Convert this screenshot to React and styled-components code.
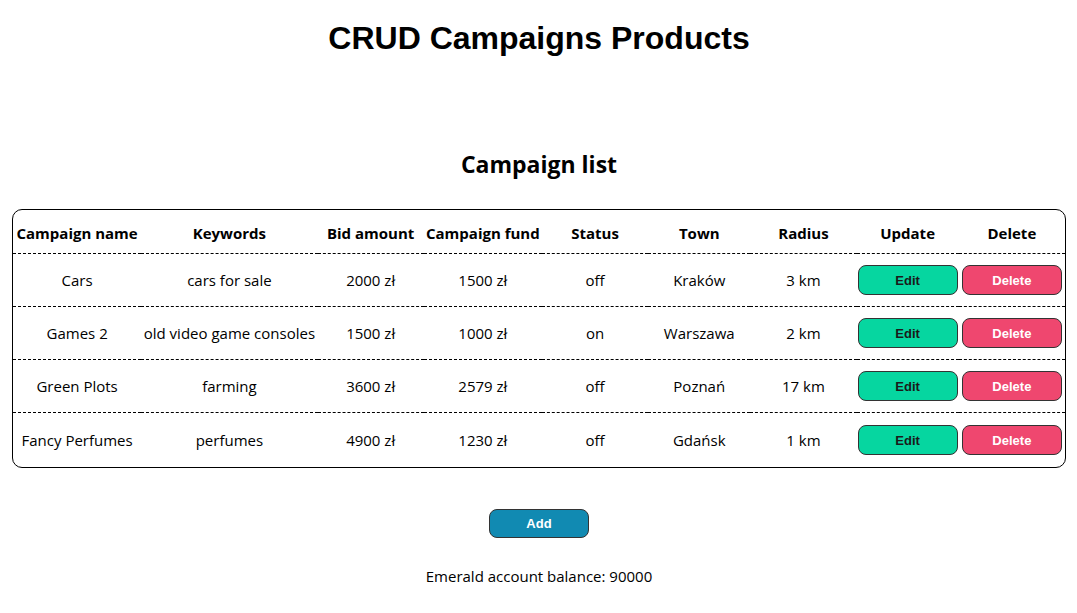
import React from "react";
import styled, { createGlobalStyle } from "styled-components";

const Global = createGlobalStyle`
  html, body { margin: 0; padding: 0; background: #fff; }
  body { font-family: "Open Sans", "Noto Sans", sans-serif; color: #000; }
`;

const Page = styled.div`
  display: flex;
  flex-direction: column;
  align-items: center;
  padding: 0 12px 0 13px;
`;

const Title = styled.h1`
  margin: 20px 0 0;
  font-family: "Liberation Sans", Arial, sans-serif;
  font-size: 32px;
  font-weight: 700;
  line-height: 37px;
`;

const Subtitle = styled.h2`
  margin: 91px 0 0;
  font-size: 23px;
  font-weight: 700;
  line-height: 32px;
`;

const TableBox = styled.div`
  margin-top: 29px;
  width: 100%;
  border: 1px solid #000;
  border-radius: 10px;
  overflow: hidden;
`;

const Table = styled.table`
  width: 100%;
  border-collapse: separate;
  border-spacing: 0;
  table-layout: fixed;
`;

const HeadCell = styled.th`
  height: 44px;
  padding: 3px 0 0;
  font-size: 15px;
  font-weight: 700;
  text-align: center;
  border-bottom: 1px dashed #000;
  white-space: nowrap;
  box-sizing: border-box;
`;

const Cell = styled.td`
  height: ${(p) => (p.$last ? "54px" : "53px")};
  padding: 0;
  font-size: 15px;
  text-align: center;
  white-space: nowrap;
  border-bottom: ${(p) => (p.$last ? "none" : "1px dashed #000")};
  vertical-align: middle;
  box-sizing: border-box;
`;

const ActionButton = styled.button`
  width: 100px;
  height: 30px;
  border: 1px solid #333;
  border-radius: 8px;
  background: ${(p) => p.$bg};
  color: ${(p) => p.$fg};
  font-family: "Liberation Sans", Arial, sans-serif;
  font-size: 13px;
  font-weight: 700;
  cursor: pointer;
  padding: 0;
  display: block;
  margin: 0 auto;
`;

const AddButton = styled(ActionButton)`
  margin-top: 41px;
  height: 29px;
`;

const Balance = styled.p`
  margin: 28px 0 0;
  font-size: 15px;
  line-height: 21px;
`;

const widths = [128, 176, 106, 118, 106, 102, 106, 102, 106];
const headers = [
  "Campaign name",
  "Keywords",
  "Bid amount",
  "Campaign fund",
  "Status",
  "Town",
  "Radius",
  "Update",
  "Delete",
];

const rows = [
  ["Cars", "cars for sale", "2000 zł", "1500 zł", "off", "Kraków", "3 km"],
  ["Games 2", "old video game consoles", "1500 zł", "1000 zł", "on", "Warszawa", "2 km"],
  ["Green Plots", "farming", "3600 zł", "2579 zł", "off", "Poznań", "17 km"],
  ["Fancy Perfumes", "perfumes", "4900 zł", "1230 zł", "off", "Gdańsk", "1 km"],
];

export default function App() {
  return (
    <>
      <Global />
      <Page>
        <Title>CRUD Campaigns Products</Title>
        <Subtitle>Campaign list</Subtitle>
        <TableBox>
          <Table>
            <colgroup>
              {widths.map((w, i) => (
                <col key={i} style={{ width: w }} />
              ))}
            </colgroup>
            <thead>
              <tr>
                {headers.map((h) => (
                  <HeadCell key={h}>{h}</HeadCell>
                ))}
              </tr>
            </thead>
            <tbody>
              {rows.map((r, ri) => {
                const last = ri === rows.length - 1;
                return (
                  <tr key={ri}>
                    {r.map((c, ci) => (
                      <Cell key={ci} $last={last}>
                        {c}
                      </Cell>
                    ))}
                    <Cell $last={last}>
                      <ActionButton $bg="#06d6a0" $fg="#1a1a1a">
                        Edit
                      </ActionButton>
                    </Cell>
                    <Cell $last={last}>
                      <ActionButton $bg="#ef476f" $fg="#fff">
                        Delete
                      </ActionButton>
                    </Cell>
                  </tr>
                );
              })}
            </tbody>
          </Table>
        </TableBox>
        <AddButton $bg="#118ab2" $fg="#fff">
          Add
        </AddButton>
        <Balance>Emerald account balance: 90000</Balance>
      </Page>
    </>
  );
}
